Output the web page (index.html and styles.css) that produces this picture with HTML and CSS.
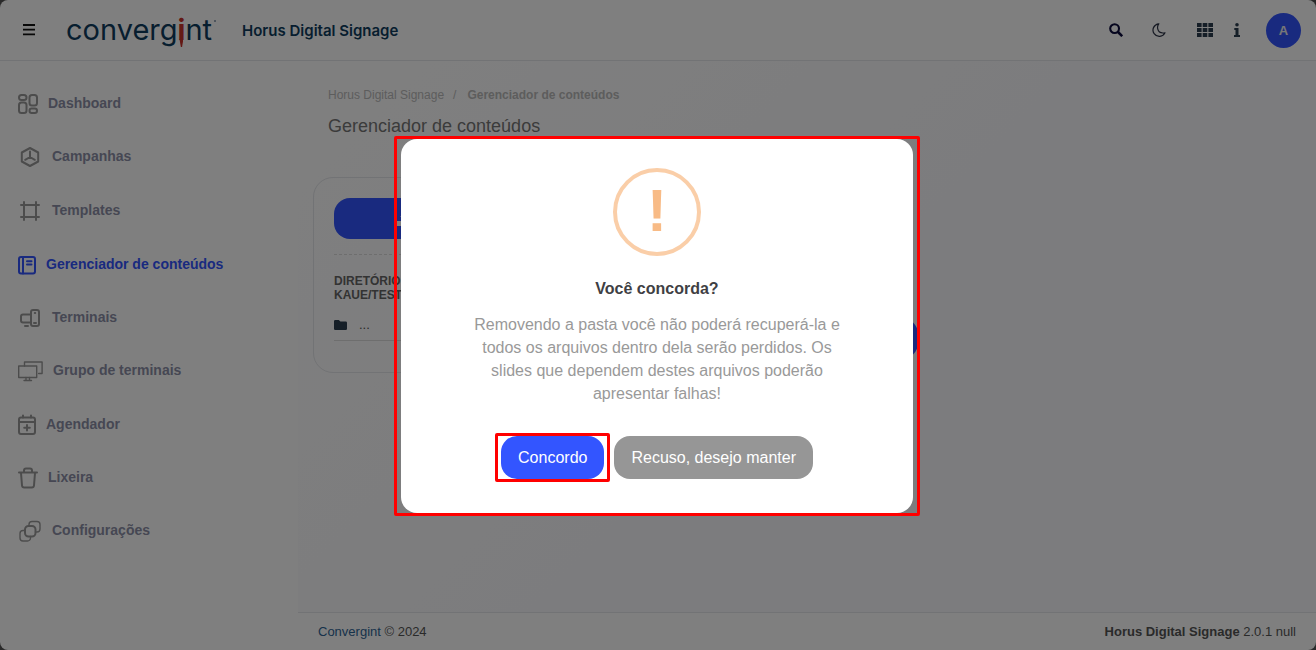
FILE: index.html
```
<!DOCTYPE html>
<html lang="pt-BR">
  <head>
    <meta charset="UTF-8" />
    <meta name="viewport" content="width=device-width, initial-scale=1.0" />
    <title>Horus Digital Signage</title>
    <link rel="stylesheet" href="styles.css">
  </head>
  <body>
    <div class="app">
      <header class="header">
        <button class="icon-btn menu-btn" aria-label="Menu">
          <svg width="12" height="12" viewBox="0 0 12 12"><path d="M0 1h12M0 5.7h12M0 10.4h12" stroke="#111" stroke-width="1.8" /></svg>
        </button>
        <a class="logo" href="#">converg<span class="logo-i">i</span>nt</a>
        <span class="brand">Horus Digital Signage</span>
        <div class="header-actions">
          <button class="icon-btn" aria-label="Buscar">
            <svg width="14" height="14" viewBox="0 0 14 14" fill="none" stroke="#0b0b3c"><circle cx="5.6" cy="5.6" r="4.4" stroke-width="2.1" /><path d="M9 9l4.2 4.2" stroke-width="2.5" /></svg>
          </button>
          <button class="icon-btn" aria-label="Modo escuro">
            <svg width="14" height="14" viewBox="0 0 14 14" fill="none" stroke="#2c3346" stroke-width="1.2" stroke-linejoin="round"><path d="M6.800.8A6.300 6.300 0 1 0 13 9.800c-3.400.600-6.500-.5-7.200-3.600C5.300 4.200 5.700 2.100 6.800.8z" /></svg>
          </button>
          <button class="icon-btn apps-btn" aria-label="Aplicativos">
            <svg width="16" height="14" viewBox="0 0 16 14" fill="#2c3e50"><path d="M0 0h4.600v4H0zM5.700 0h4.600v4H5.700zM11.400 0H16v4h-4.600zM0 5h4.600v4H0zM5.700 5h4.600v4H5.700zM11.400 5H16v4h-4.600zM0 10h4.600v4H0zM5.700 10h4.600v4H5.700zM11.400 10H16v4h-4.600z" /></svg>
          </button>
          <button class="icon-btn info-btn" aria-label="Informações">
            <svg width="6" height="14" viewBox="0 0 6 14" fill="#2c3e50"><circle cx="3" cy="1.800" r="1.800" /><path d="M.3 5h4.200v6.900H6V14H0v-2.100h1.500V7H.3z" /></svg>
          </button>
          <button class="avatar">A</button>
        </div>
      </header>

      <div class="layout">
        <nav class="sidebar">
          <ul>
            <li><a href="#">
              <svg width="20" height="22" viewBox="0 0 20 22"><rect x="1" y="2" width="7.500" height="5" rx="2.500" /><rect x="1" y="9.500" width="7.500" height="10.500" rx="2.500" /><rect x="11.500" y="2" width="7.500" height="10.500" rx="2.500" /><rect x="11.500" y="15.500" width="7.500" height="4.500" rx="2.200" /></svg>
              <span>Dashboard</span></a></li>
            <li><a href="#">
              <svg width="24" height="24" viewBox="0 0 24 24"><path d="M12 3l8.200 4.500v9L12 21l-8.200-4.500v-9z" /><path d="M12 6.500V12l-4.800 2.800M12 12l4.800 2.800" /></svg>
              <span>Campanhas</span></a></li>
            <li><a href="#">
              <svg width="24" height="24" viewBox="0 0 24 24"><path d="M6 3v18M18 3v18M3 6h18M3 18h18" /></svg>
              <span>Templates</span></a></li>
            <li><a class="active" href="#">
              <svg width="18" height="24" viewBox="0 0 18 24"><rect x="1" y="4" width="16" height="16.500" rx="2" /><path d="M5 4v16.500M9 8.300h4.500M9 11.600h4.500" /></svg>
              <span>Gerenciador de conteúdos</span></a></li>
            <li><a href="#">
              <svg width="24" height="22" viewBox="0 1 24 22"><rect x="13" y="4" width="8" height="16" rx="2" /><path d="M13 8.500H5a2 2 0 0 0-2 2v4a2 2 0 0 0 2 2h8M7 20h3M16 17h2M16.800 7h.4" /></svg>
              <span>Terminais</span></a></li>
            <li><a href="#">
              <svg class="thin" width="25" height="24" viewBox="0 0 25 24"><rect x=".7" y="7" width="18" height="11.500" /><path d="M6.500 7V3h17.600v11.500h-3.500M8 18.500v2.500M11.500 18.500v2.500M6 21.500h7.500" /></svg>
              <span>Grupo de terminais</span></a></li>
            <li><a href="#">
              <svg width="18" height="24" viewBox="0 0 18 24"><rect x="1" y="4.500" width="16" height="16.500" rx="2" /><path d="M1 9h16M5 2.500v2M13 2.500v2M9 12v5.500M6.200 14.700h5.600" /></svg>
              <span>Agendador</span></a></li>
            <li><a href="#">
              <svg width="20" height="22" viewBox="0 0 20 22"><path d="M1 5.500h18M6 5V3.500a2 2 0 0 1 2-2h4a2 2 0 0 1 2 2V5M3 6l1 12.500a2.200 2.200 0 0 0 2.200 2h7.600a2.200 2.200 0 0 0 2.200-2L17 6" /></svg>
              <span>Lixeira</span></a></li>
            <li><a href="#">
              <svg class="thin" width="24" height="24" viewBox="0 0 24 24"><rect x="7" y="7" width="10.500" height="10.500" rx="3.500" stroke-width="2" /><path d="M11 7V5.500a3 3 0 0 1 3-3h5a3 3 0 0 1 3 3v4.500a3 3 0 0 1-3 3h-1.500M7 11.500H5a3 3 0 0 0-3 3V19a3 3 0 0 0 3 3h4.500a3 3 0 0 0 3-3v-1.500" /></svg>
              <span>Configurações</span></a></li>
          </ul>
        </nav>

        <div class="page">
          <main class="content">
            <div class="breadcrumb">
              <a href="#">Horus Digital Signage</a><span>/</span><strong>Gerenciador de conteúdos</strong>
            </div>
            <h1>Gerenciador de conteúdos</h1>
            <div class="panels">
              <section class="card">
                <button class="upload-btn" aria-label="Enviar arquivo">
                  <svg width="16" height="14" viewBox="0 0 16 14" fill="#fff"><path d="M8 0l5 5H10v4H6V5H3zM0 9h5v2h6V9h5v5H0z" /></svg>
                </button>
                <h2>DIRETÓRIO:<br>KAUE/TESTE</h2>
                <a class="folder" href="#">
                  <svg width="13" height="10" viewBox="0 0 13 10" fill="#2c3e50"><path d="M1.200 0h3.600l1.600 1.500h5.400A1.200 1.200 0 0 1 13 2.700v6.100A1.200 1.200 0 0 1 11.800 10H1.200A1.200 1.200 0 0 1 0 8.800V1.200A1.200 1.200 0 0 1 1.200 0z" /></svg>
                  <span>...</span>
                </a>
              </section>
              <div class="folder-actions">
                <button class="remove-btn" aria-label="Remover pasta"></button>
              </div>
            </div>
          </main>
          <footer class="footer">
            <span><a href="#">Convergint</a> © 2024</span>
            <span><strong>Horus Digital Signage</strong> 2.0.1 null</span>
          </footer>
        </div>
      </div>
    </div>

    <div class="overlay">
      <div class="highlight highlight-modal">
        <div class="modal" role="dialog" aria-modal="true" aria-labelledby="modalTitle">
          <div class="modal-icon">!</div>
          <h2 id="modalTitle">Você concorda?</h2>
          <p>Removendo a pasta você não poderá recuperá-la e todos os arquivos dentro dela serão perdidos. Os slides que dependem destes arquivos poderão apresentar falhas!</p>
          <div class="modal-actions">
            <div class="highlight highlight-button">
              <button class="button confirm">Concordo</button>
            </div>
            <button class="button cancel">Recuso, desejo manter</button>
          </div>
        </div>
      </div>
    </div>
  </body>
</html>
```
FILE: styles.css
```
* {
  box-sizing: border-box;
}
html {
  background-color: #555;
}
body {
  margin: 0;
  font-family: "Liberation Sans", Arial, sans-serif;
  font-size: 13px;
  color: #555;
}
a {
  text-decoration: none;
  color: inherit;
}
button {
  font-family: inherit;
  border: none;
  padding: 0;
  cursor: pointer;
}
svg {
  display: block;
  flex-shrink: 0;
}
.app {
  display: flex;
  flex-direction: column;
  min-height: 100vh;
  background-color: #fff;
  border-radius: 8px;
  overflow: hidden;
}

/* header */
.header {
  display: flex;
  align-items: center;
  height: 61px;
  padding: 0 15px;
  border-bottom: 1px solid #e4e6ea;
}
.icon-btn {
  display: flex;
  justify-content: center;
  width: 43px;
  background: none;
}
.menu-btn {
  width: 28px;
}
.logo {
  position: relative;
  margin-left: 23px;
  font-family: Inter, sans-serif;
  font-size: 29px;
  line-height: 40px;
  color: #0f3d5e;
}
/* small trademark dot after the t */
.logo::after {
  content: "";
  position: absolute;
  top: 10px;
  right: -4px;
  width: 2px;
  height: 2px;
  border-radius: 50%;
  background-color: #7b8fa3;
}
.logo-i {
  position: relative;
  font-weight: 700;
  color: #c8322b;
}
/* pointed tail below the red i */
.logo-i::after {
  content: "";
  position: absolute;
  left: 50%;
  bottom: 0;
  width: 4px;
  height: 8px;
  margin-left: -2px;
  background-color: #c8322b;
  clip-path: polygon(0 0, 100% 0, 65% 100%, 35% 100%);
}
.brand {
  margin-left: 30px;
  font-family: Inter, sans-serif;
  font-size: 15px;
  font-weight: 600;
  color: #0f3d5e;
}
.header-actions {
  display: flex;
  align-items: center;
  margin-left: auto;
}
.apps-btn {
  width: 50px;
}
.info-btn {
  width: 14px;
}
.avatar {
  width: 35px;
  height: 35px;
  margin-left: 22px;
  border-radius: 50%;
  background-color: #3355ff;
  color: #eee;
  font-size: 13px;
  font-weight: bold;
}

/* sidebar */
.layout {
  display: flex;
  flex: 1;
}
.sidebar {
  width: 298px;
  flex-shrink: 0;
  padding: 17px 18px;
}
.sidebar ul {
  list-style: none;
  margin: 0;
  padding: 0;
}
.sidebar a {
  display: flex;
  align-items: center;
  gap: 10px;
  padding: 15px 0;
  font-size: 14px;
  font-weight: bold;
  line-height: 16px;
  color: #8c8fa7;
}
.sidebar span {
  padding-bottom: 2px;
}
.sidebar svg {
  fill: none;
  stroke: #999;
  stroke-width: 2;
  stroke-linecap: round;
  stroke-linejoin: round;
}
.sidebar svg.thin {
  stroke-width: 1.4;
}
.sidebar a.active {
  color: #3355ff;
}
.sidebar .active svg {
  stroke: #3355ff;
}

/* page */
.page {
  display: flex;
  flex-direction: column;
  flex: 1;
}
.content {
  flex: 1;
  padding: 27px 15px;
  background: linear-gradient(135deg, #fff 0%, #f9f9fc 50%);
}
.breadcrumb {
  display: flex;
  gap: 9px;
  padding-left: 15px;
  font-size: 12px;
  line-height: 14px;
  color: #bbb;
}
.breadcrumb strong {
  margin-left: 2px;
}
h1 {
  margin: 14px 0 41px 15px;
  font-size: 18px;
  font-weight: normal;
  line-height: 20px;
  color: #777;
}
.panels {
  display: flex;
}
.card {
  width: 280px;
  padding: 20px 20px 31px;
  border: 1px solid #e4e6ea;
  border-radius: 20px;
}
.upload-btn {
  display: flex;
  align-items: center;
  justify-content: center;
  width: 100%;
  height: 41px;
  padding-right: 96px;
  border-radius: 16px;
  background-color: #3355ff;
}
.card h2 {
  margin: 15px 0 0;
  padding-top: 19px;
  border-top: 1px dashed #dcdcdc;
  font-size: 12px;
  line-height: 14px;
  color: #666;
}
.folder {
  display: flex;
  align-items: center;
  gap: 12px;
  margin-top: 10px;
  padding: 5px 0 7px;
  border-bottom: 1px solid #dcdcdc;
  line-height: 16px;
}
.folder-actions {
  display: flex;
  flex: 1;
  align-items: flex-end;
  padding: 0 0 14px 200px;
}
.remove-btn {
  width: 125px;
  height: 41px;
  border-radius: 16px;
  background-color: #3355ff;
}
.footer {
  display: flex;
  justify-content: space-between;
  padding: 11px 20px;
  border-top: 1px solid #e4e6ea;
  line-height: 15px;
}
.footer a {
  color: #2f6596;
}

/* confirmation modal */
.overlay {
  position: fixed;
  inset: 0;
  display: flex;
  align-items: center;
  justify-content: center;
  padding: 2px 2px 0 0;
  background-color: rgba(0, 0, 0, 0.5);
}
.highlight {
  border: 3px solid #f00;
  border-radius: 2px;
}
.highlight-modal {
  padding: 0 4px;
}
.highlight-button {
  padding: 0 3px;
}
.modal {
  width: 512px;
  padding: 29px 60px 31px;
  border-radius: 16px;
  background-color: #fff;
  text-align: center;
}
.modal-icon {
  width: 88px;
  height: 88px;
  margin: 0 auto;
  border: 4px solid #facea8;
  border-radius: 50%;
  font-size: 60px;
  font-weight: bold;
  line-height: 78px;
  color: #f8bb86;
}
.modal h2 {
  margin: 23px 0 14px;
  font-size: 16px;
  line-height: 20px;
  color: #3f3f44;
}
.modal p {
  margin: 0 0 28px;
  font-size: 16px;
  line-height: 23px;
  color: #999;
}
.modal-actions {
  display: flex;
  align-items: center;
  justify-content: center;
  gap: 4px;
  padding-right: 6px;
}
.button {
  display: block;
  height: 43px;
  padding: 0 17px;
  border-radius: 16px;
  color: #fff;
  font-size: 16px;
}
.button.confirm {
  background-color: #3355ff;
}
.button.cancel {
  background-color: #969696;
}
```
